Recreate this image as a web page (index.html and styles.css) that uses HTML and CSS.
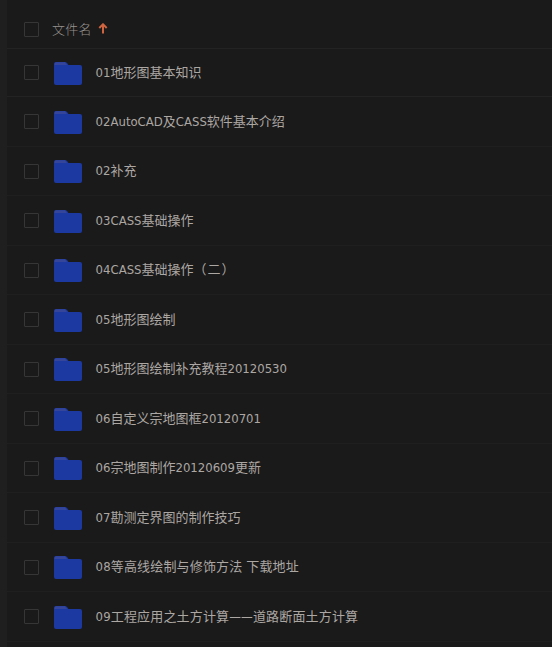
FILE: index.html
```
<!doctype html>
<html lang="zh-CN">
<head>
	<meta charset="utf-8">
	<title>文件列表</title>
	<link rel="stylesheet" href="styles.css">
</head>
<body>
	<svg class="defs" width="0" height="0">
		<symbol id="folder" viewBox="0 0 30 25">
			<path d="M1 3 Q1 1 3 1 H12 Q13 1 14 2 L15.500 4 H27 Q29 4 29 6 V22 Q29 24 27 24 H3 Q1 24 1 22 Z" fill="#1b39a0"/>
			<path d="M1.500 4 V3 Q1.500 1.300 3 1.300 H12 L14 4 Z" fill="#34459a"/>
		</symbol>
	</svg>

	<div class="list">
		<div class="head">
			<span class="check"></span>
			<span class="title">文件名</span>
			<svg class="sort" width="10" height="11" viewBox="0 0 10 11"><path d="M5 10.500 V1.500 M1.300 5 L5 1.300 L8.700 5" fill="none" stroke="#cf6540" stroke-width="2"/></svg>
		</div>
		<div class="row"><span class="check"></span><svg class="folder"><use href="#folder"/></svg><span class="name">01地形图基本知识</span></div>
		<div class="row"><span class="check"></span><svg class="folder"><use href="#folder"/></svg><span class="name">02AutoCAD及CASS软件基本介绍</span></div>
		<div class="row"><span class="check"></span><svg class="folder"><use href="#folder"/></svg><span class="name">02补充</span></div>
		<div class="row"><span class="check"></span><svg class="folder"><use href="#folder"/></svg><span class="name">03CASS基础操作</span></div>
		<div class="row"><span class="check"></span><svg class="folder"><use href="#folder"/></svg><span class="name">04CASS基础操作<span class="paren">（二）</span></span></div>
		<div class="row"><span class="check"></span><svg class="folder"><use href="#folder"/></svg><span class="name">05地形图绘制</span></div>
		<div class="row"><span class="check"></span><svg class="folder"><use href="#folder"/></svg><span class="name">05地形图绘制补充教程20120530</span></div>
		<div class="row"><span class="check"></span><svg class="folder"><use href="#folder"/></svg><span class="name">06自定义宗地图框20120701</span></div>
		<div class="row"><span class="check"></span><svg class="folder"><use href="#folder"/></svg><span class="name">06宗地图制作20120609更新</span></div>
		<div class="row"><span class="check"></span><svg class="folder"><use href="#folder"/></svg><span class="name">07勘测定界图的制作技巧</span></div>
		<div class="row"><span class="check"></span><svg class="folder"><use href="#folder"/></svg><span class="name long">08等高线绘制与修饰方法 下载地址</span></div>
		<div class="row"><span class="check"></span><svg class="folder"><use href="#folder"/></svg><span class="name long">09工程应用之土方计算——道路断面土方计算</span></div>
	</div>
</body>
</html>
```
FILE: styles.css
```
body {
	margin: 0;
	height: 647px;
	overflow: hidden;
	background: #1a1a1a;
	font: 13px/20px "DejaVu Sans Condensed", "Noto Sans CJK SC", sans-serif;
	color: #aca7a3;
}

.defs {
	display: block;
}

.list {
	height: 647px;
	border-left: 7px solid #1f1f1f;
}

.head, .row {
	display: flex;
	align-items: center;
	box-sizing: border-box;
	padding-left: 17px;
	border-bottom: 1px solid #1f1f1f;
}

.head {
	height: 49px;
	padding-top: 11px;
	border-color: #232323;
}

.row {
	height: 49.5px;
}

.head + .row {
	height: 48.4px;
	border-color: #232323;
}

.check {
	box-sizing: border-box;
	width: 15px;
	height: 15px;
	border: 1px solid #363636;
	border-radius: 1px;
}

.title {
	margin-left: 13px;
	font-weight: 300;
	letter-spacing: .3px;
	color: #96918d;
}

.sort {
	margin-left: 6px;
	margin-bottom: 2px;
}

.folder {
	width: 30px;
	height: 25px;
	margin-top: 1px;
	margin-left: 14px;
}

.name {
	margin-top: .6px;
	margin-left: 12.6px;
	white-space: nowrap;
}

.head + .row .name {
	margin-top: 0;
}

.name.long {
	letter-spacing: .16px;
}

.paren {
	letter-spacing: 1px;
}
```
